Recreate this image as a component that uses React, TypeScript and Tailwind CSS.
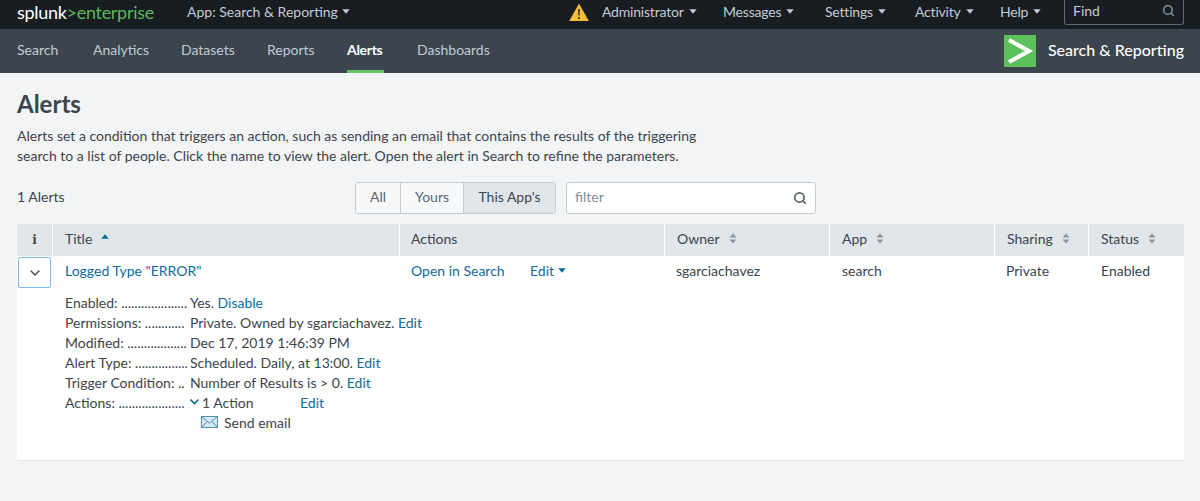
import { ChevronDown, Search } from 'lucide-react';

const font = "font-['Lato','Liberation_Sans',sans-serif]";
const cols = 'grid grid-cols-[35px_346px_264px_164px_164px_93px_95px] gap-x-px';

function Caret({ className = '' }: { className?: string }) {
  return (
    <svg viewBox="0 0 8 5" className={`w-2 h-[5px] ${className}`} fill="currentColor">
      <path d="M0.3 0.3h7.4L4 4.8z" />
    </svg>
  );
}

function SortIcon() {
  return (
    <svg viewBox="0 0 8 11" className="w-2 h-[11px] text-[#8b959e]" fill="currentColor">
      <path d="M4 0.5L7.5 4.5H0.5z" />
      <path d="M4 10.5L0.5 6.5H7.5z" />
    </svg>
  );
}

function TopItem({ label, width }: { label: string; width: string }) {
  return (
    <div className={`flex items-center gap-[5px] tracking-[-0.2px] ${width}`}>
      <span>{label}</span>
      <Caret />
    </div>
  );
}

function HeaderCell({ label }: { label: string }) {
  return (
    <div className="bg-[#e1e6eb] flex items-center gap-[9px] pl-3 pb-[3px]">
      <span>{label}</span>
      <SortIcon />
    </div>
  );
}

function Detail({ label, dots, children }: { label: string; dots: string; children: React.ReactNode }) {
  return (
    <div className="flex h-5 items-center">
      <div className="w-[125px] whitespace-nowrap overflow-hidden">
        {label} <span>{dots}</span>
      </div>
      <div>{children}</div>
    </div>
  );
}

export default function App() {
  const link = 'text-[#106a9c]';

  return (
    <div className={`${font} w-[1200px] h-[501px] bg-[#f2f4f5] text-[14px] text-[#3c444d] overflow-hidden`}>
      {/* top bar */}
      <div className="h-[29px] bg-[#171d21] flex items-center pb-[6px] text-[#c3cbd4]">
        <div className="pl-[17px] w-[187px] text-[18px] tracking-[-0.3px] leading-none text-white">
          splunk<span className="text-[#5cb85c]">&gt;enterprise</span>
        </div>
        <div className="flex items-center gap-1">
          <span>App: Search &amp; Reporting</span>
          <Caret />
        </div>
        <div className="ml-auto flex items-center">
          <svg viewBox="0 0 20 18" className="w-5 h-[18px] mr-[13px]">
            <path d="M10 0.5L19.8 18H0.2z" fill="#f8be34" />
            <path d="M9 6h2l-.3 6.5h-1.4z M9 14h2v2H9z" fill="#3c444d" />
          </svg>
          <TopItem label="Administrator" width="w-[121px]" />
          <TopItem label="Messages" width="w-[102px]" />
          <TopItem label="Settings" width="w-[90px]" />
          <TopItem label="Activity" width="w-[85px]" />
          <TopItem label="Help" width="w-[64px]" />
          <div className="w-[120px] h-[26px] mr-4 self-start border border-t-0 border-[#5c6773] rounded-b-[3px] flex items-center justify-between pl-2 pr-2 pb-[2px]">
            <span>Find</span>
            <Search className="w-[13px] h-[13px] text-[#7c8791]" strokeWidth={3} />
          </div>
        </div>
      </div>

      {/* app nav */}
      <div className="h-[44px] bg-[#3c444d] flex items-stretch text-[#c3cbd4]">
        <div className="flex pl-[17px] gap-[33px]">
          <div className="flex items-center pb-1 w-[43px]">Search</div>
          <div className="flex items-center pb-1 w-[55px]">Analytics</div>
          <div className="flex items-center pb-1 w-[53px]">Datasets</div>
          <div className="flex items-center pb-1 w-[47px]">Reports</div>
          <div className="flex items-center pb-px w-[37px] text-white font-bold tracking-[-0.3px] border-b-[3px] border-b-[#65c466]">Alerts</div>
          <div className="flex items-center pb-1">Dashboards</div>
        </div>
        <div className="ml-auto flex items-center pr-4">
          <div className="w-8 h-8 bg-[#5cc05c] mr-3">
            <svg viewBox="0 0 32 32" className="w-8 h-8" fill="none" stroke="#ffffff" strokeWidth="4">
              <path d="M5 5L25 16L5 27" />
            </svg>
          </div>
          <span className="text-white text-[16px] font-medium pb-[2px]">Search &amp; Reporting</span>
        </div>
      </div>

      {/* page */}
      <div className="px-[17px]">
        <h1 className="text-[24px] leading-none font-bold mt-[19px]">Alerts</h1>
        <p className="mt-[10px] text-[14px] leading-5 w-[720px]">
          Alerts set a condition that triggers an action, such as sending an email that contains the results of the triggering
          <br />
          search to a list of people. Click the name to view the alert. Open the alert in Search to refine the parameters.
        </p>

        <div className="flex items-center mt-4 h-8">
          <div className="w-[338px] pb-[3px]">1 Alerts</div>
          <div className="flex h-8 border border-[#c3cbd4] rounded-[3px] text-[#5c6773] mr-[10px]">
            <div className="w-[45px] pb-[3px] flex items-center justify-center bg-[#f7f8fa] border-r border-[#c3cbd4] rounded-l-[3px]">All</div>
            <div className="w-[63px] pb-[3px] flex items-center justify-center bg-[#f7f8fa] border-r border-[#c3cbd4]">Yours</div>
            <div className="w-[91px] pb-[3px] flex items-center justify-center bg-[#e1e6eb] text-[#3c444d] rounded-r-[3px]">This App's</div>
          </div>
          <div className="w-[250px] h-8 bg-white border border-[#c3cbd4] rounded-[3px] flex items-center justify-between pl-2 pr-2 text-[#818d99]">
            <span className="pb-[3px]">filter</span>
            <Search className="w-[14px] h-[14px] text-[#5c6773]" strokeWidth={3} />
          </div>
        </div>

        <div className="mt-[10px] w-[1167px] h-[237px] bg-white border-b border-[#e1e6eb]">
          <div className={`${cols} h-8`}>
            <div className="bg-[#e1e6eb] flex items-center justify-center pb-px font-['DejaVu_Serif',serif] font-bold text-[12px]">i</div>
            <div className="bg-[#e1e6eb] flex items-center gap-[9px] pl-3 pb-[3px]">
              <span>Title</span>
              <svg viewBox="0 0 8 5" className="w-2 h-[5px] text-[#106a9c] -mt-1" fill="currentColor">
                <path d="M4 0.2L7.8 4.8H0.2z" />
              </svg>
            </div>
            <div className="bg-[#e1e6eb] flex items-center pl-[11px] pb-[3px]">Actions</div>
            <HeaderCell label="Owner" />
            <HeaderCell label="App" />
            <HeaderCell label="Sharing" />
            <HeaderCell label="Status" />
          </div>

          <div className={`${cols} h-[29px]`}>
            <div>
              <div className="w-[33px] h-[31px] mt-px ml-px bg-white border border-[#77bdea] rounded-[2px] flex items-center justify-center">
                <ChevronDown className="w-4 h-4" strokeWidth={2} />
              </div>
            </div>
            <div className={`pl-3 pb-1 flex items-center ${link}`}>Logged Type "ERROR"</div>
            <div className={`pl-[11px] pb-1 flex items-center ${link}`}>
              <span className="w-[119px]">Open in Search</span>
              <span className="mr-1">Edit</span>
              <Caret />
            </div>
            <div className="pl-[11px] pb-1 flex items-center">sgarciachavez</div>
            <div className="pl-3 pb-1 flex items-center">search</div>
            <div className="pl-[11px] pb-1 flex items-center">Private</div>
            <div className="pl-3 pb-1 flex items-center">Enabled</div>
          </div>

          <div className="mt-[7px] pl-12 whitespace-nowrap">
            <Detail label="Enabled:" dots="....................">Yes. <span className={link}>Disable</span></Detail>
            <Detail label="Permissions:" dots="............">Private. Owned by sgarciachavez. <span className={link}>Edit</span></Detail>
            <Detail label="Modified:" dots="..................">Dec 17, 2019 1:46:39 PM</Detail>
            <Detail label="Alert Type:" dots="................">Scheduled. Daily, at 13:00. <span className={link}>Edit</span></Detail>
            <Detail label="Trigger Condition:" dots="..">Number of Results is &gt; 0. <span className={link}>Edit</span></Detail>
            <Detail label="Actions:" dots="....................">
              <div className="flex items-center">
                <svg viewBox="0 0 12 8" className="w-3 h-2" fill="none" stroke="#106a9c" strokeWidth="1.6">
                  <path d="M0.5 1.5L4.5 5.5L8.5 1.5" />
                </svg>
                <span className="w-[98px]">1 Action</span>
                <span className={link}>Edit</span>
              </div>
            </Detail>
            <div className="flex h-5 items-center pl-[136px] gap-[6px]">
              <svg viewBox="0 0 17 12" className="w-[17px] h-3" fill="#d6e8f3" stroke="#4f8fb8" strokeWidth="1">
                <path d="M0.5 0.5h16v11h-16z" />
                <path d="M0.5 0.5L8.5 7L16.5 0.5M0.5 11.5L6 5.5M16.5 11.5L11 5.5" fill="none" />
              </svg>
              <span>Send email</span>
            </div>
          </div>
        </div>
      </div>
    </div>
  );
}
